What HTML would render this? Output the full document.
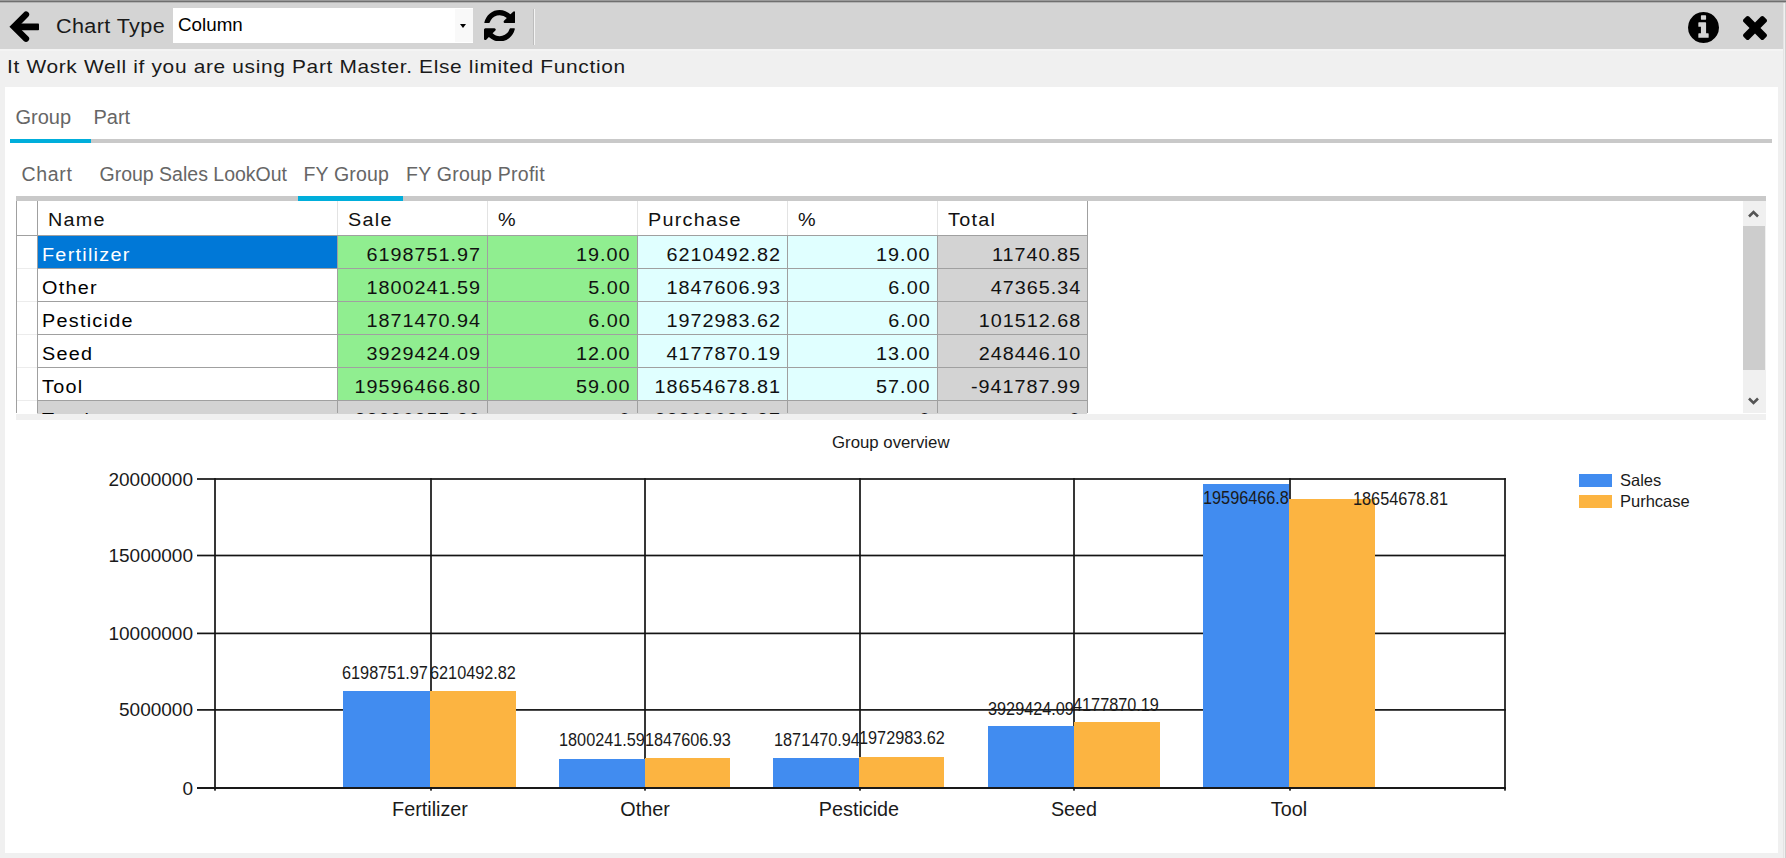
<!DOCTYPE html>
<html><head><meta charset="utf-8">
<style>
html,body{margin:0;padding:0;}
body{width:1786px;height:858px;overflow:hidden;background:#f0f0f0;position:relative;font-family:"Liberation Sans",sans-serif;color:#000;}
.a{position:absolute;}
.t{position:absolute;white-space:nowrap;line-height:1;}
.g{font-size:18px;letter-spacing:1.15px;color:#111;transform:scaleX(1.1);transform-origin:0 0}
.n{letter-spacing:0.9px;margin-right:-0.9px;transform-origin:100% 0}
.yl{font-size:19px;color:#1a1a1a}
.xl{font-size:19.8px;color:#1a1a1a}
.dl{font-size:18.7px;color:#1a1a1a;transform:scaleX(0.87);transform-origin:0 0}
.lg{font-size:16.5px;color:#1a1a1a}
svg{position:absolute;display:block;}
</style></head><body>
<!-- top border -->
<div class="a" style="left:0;top:0;width:1786px;height:1px;background:#9a9a9a"></div><div class="a" style="left:0;top:1px;width:1786px;height:1px;background:#6f6f6f"></div><div class="a" style="left:0;top:2px;width:1786px;height:1px;background:#b4b4b4"></div>
<!-- toolbar -->
<div class="a" style="left:0;top:3px;width:1783px;height:46px;background:#d4d4d4"></div>
<div class="a" style="left:1783px;top:3px;width:1px;height:855px;background:#e4e4e4"></div><div class="a" style="left:1785px;top:3px;width:1px;height:855px;background:#d0d0d0"></div>
<!-- back arrow -->
<svg style="left:0;top:0" width="50" height="50" viewBox="0 0 50 50"><polyline points="26,14.6 13.9,26.8 26,38.7" fill="none" stroke="#000" stroke-width="6.3" stroke-linecap="round" stroke-linejoin="miter"/><rect x="16" y="23.6" width="23" height="6.7" rx="0.8" fill="#000"/></svg>
<div class="t" style="left:56px;top:16px;font-size:20px;letter-spacing:0.35px;color:#1a1a1a;transform:scaleX(1.08);transform-origin:0 0">Chart Type</div>
<!-- combo -->
<div class="a" style="left:173px;top:8px;width:300px;height:35px;background:#fff"></div>
<div class="a" style="left:455px;top:9px;width:18px;height:33px;background:#f9f9f9"></div>
<div class="t" style="left:178px;top:15.5px;font-size:18.8px;color:#000">Column</div>
<div class="a" style="left:460px;top:24px;width:0;height:0;border-left:3.5px solid transparent;border-right:3.5px solid transparent;border-top:4px solid #000"></div>
<!-- refresh -->
<svg style="left:484px;top:9.8px" width="31.4" height="31.4" viewBox="0 128 1536 1536"><path d="M1511 1056q0 5-1 7-64 268-268 434.5t-478 166.5q-146 0-282.5-55t-243.5-157l-129 129q-19 19-45 19t-45-19-19-45v-448q0-26 19-45t45-19h448q26 0 45 19t19 45-19 45l-137 137q71 66 161 102t187 36q134 0 250-65t186-179q11-17 53-117 8-23 30-23h192q13 0 22.5 9.5t9.5 22.5zm25-800v448q0 26-19 45t-45 19h-448q-26 0-45-19t-19-45 19-45l138-138q-148-137-349-137-134 0-250 65t-186 179q-11 17-53 117-8 23-30 23h-199q-13 0-22.5-9.5t-9.5-22.5v-7q65-268 270-434.5t480-166.5q146 0 284 55.5t245 156.5l130-129q19-19 45-19t45 19 19 45z"/></svg>
<!-- separator -->
<div class="a" style="left:533px;top:9px;width:1px;height:36px;background:#bdbdbd"></div>
<div class="a" style="left:534px;top:9px;width:1px;height:36px;background:#f4f4f4"></div>
<!-- info -->
<svg style="left:1688.3px;top:11.5px" width="31" height="31" viewBox="0 128 1536 1536"><path d="M1024 1376v-160q0-14-9-23t-23-9h-96v-512q0-14-9-23t-23-9h-320q-14 0-23 9t-9 23v160q0 14 9 23t23 9h96v320h-96q-14 0-23 9t-9 23v160q0 14 9 23t23 9h448q14 0 23-9t9-23zm-128-896v-160q0-14-9-23t-23-9h-192q-14 0-23 9t-9 23v160q0 14 9 23t23 9h192q14 0 23-9t9-23zm640 416q0 209-103 385.5t-279.5 279.5-385.5 103-385.5-103-279.5-279.5-103-385.5 103-385.5 279.5-279.5 385.5-103 385.5 103 279.5 279.5 103 385.5z"/></svg>
<!-- close -->
<svg style="left:1743.2px;top:16.2px" width="24" height="24" viewBox="110 366 1188 1188"><path d="M1298 1322q0 40-28 68l-136 136q-28 28-68 28t-68-28l-294-294-294 294q-28 28-68 28t-68-28l-136-136q-28-28-28-68t28-68l294-294-294-294q-28-28-28-68t28-68l136-136q28-28 68-28t68 28l294 294 294-294q28-28 68-28t68 28l136 136q28 28 28 68t-28 68l-294 294 294 294q28 28 28 68z"/></svg>

<div class="a" style="left:0;top:49px;width:1783px;height:2px;background:#f4f4f4"></div>
<!-- info label -->
<div class="t" style="left:6.5px;top:57px;font-size:19px;letter-spacing:0.6px;color:#1a1a1a;transform:scaleX(1.1);transform-origin:0 0">It Work Well if you are using Part Master. Else limited Function</div>

<!-- white panel -->
<div class="a" style="left:5px;top:87px;width:1773px;height:766px;background:#fff"></div>

<!-- tabs 1 -->
<div class="t" style="left:15.5px;top:107px;font-size:20px;color:#666">Group</div>
<div class="t" style="left:93.5px;top:107px;font-size:20px;color:#666">Part</div>
<div class="a" style="left:10px;top:139px;width:1762px;height:4px;background:#c9c9c9"></div>
<div class="a" style="left:10px;top:139px;width:81px;height:4px;background:#00aedb"></div>

<!-- tabs 2 -->
<div class="t" style="left:21.5px;top:164.5px;font-size:19.5px;letter-spacing:0.7px;color:#666">Chart</div>
<div class="t" style="left:99.5px;top:164.5px;font-size:19.5px;color:#666">Group Sales LookOut</div>
<div class="t" style="left:303.5px;top:164.5px;font-size:19.5px;letter-spacing:0.15px;color:#666">FY Group</div>
<div class="t" style="left:406px;top:164.5px;font-size:19.5px;letter-spacing:0.25px;color:#666">FY Group Profit</div>
<div class="a" style="left:16px;top:196px;width:1750px;height:5px;background:#c9c9c9"></div>
<div class="a" style="left:298px;top:196px;width:105px;height:5px;background:#00aedb"></div>

<!-- GRID -->
<div class="a" style="left:16px;top:201px;width:1750px;height:213px;background:#fff;overflow:hidden">
<div class="t g" style="left:31.5px;top:9.5px">Name</div>
<div class="t g" style="left:331.5px;top:9.5px">Sale</div>
<div class="t g" style="left:481.5px;top:9.5px">%</div>
<div class="t g" style="left:631.5px;top:9.5px">Purchase</div>
<div class="t g" style="left:781.5px;top:9.5px">%</div>
<div class="t g" style="left:931.5px;top:9.5px">Total</div>
<div class="a" style="left:21px;top:35px;width:300px;height:33px;background:#0078d7"></div>
<div class="a" style="left:321px;top:35px;width:150px;height:33px;background:#90ee90"></div>
<div class="a" style="left:471px;top:35px;width:150px;height:33px;background:#90ee90"></div>
<div class="a" style="left:621px;top:35px;width:150px;height:33px;background:#e0ffff"></div>
<div class="a" style="left:771px;top:35px;width:150px;height:33px;background:#e0ffff"></div>
<div class="a" style="left:921px;top:35px;width:150px;height:33px;background:#d3d3d3"></div>
<div class="t g" style="left:26px;top:44.5px;color:#fff">Fertilizer</div>
<div class="t g n" style="right:1286px;top:44.5px">6198751.97</div>
<div class="t g n" style="right:1136px;top:44.5px">19.00</div>
<div class="t g n" style="right:986px;top:44.5px">6210492.82</div>
<div class="t g n" style="right:836px;top:44.5px">19.00</div>
<div class="t g n" style="right:686px;top:44.5px">11740.85</div>
<div class="a" style="left:21px;top:68px;width:300px;height:33px;background:#ffffff"></div>
<div class="a" style="left:321px;top:68px;width:150px;height:33px;background:#90ee90"></div>
<div class="a" style="left:471px;top:68px;width:150px;height:33px;background:#90ee90"></div>
<div class="a" style="left:621px;top:68px;width:150px;height:33px;background:#e0ffff"></div>
<div class="a" style="left:771px;top:68px;width:150px;height:33px;background:#e0ffff"></div>
<div class="a" style="left:921px;top:68px;width:150px;height:33px;background:#d3d3d3"></div>
<div class="t g" style="left:26px;top:77.5px;color:#000">Other</div>
<div class="t g n" style="right:1286px;top:77.5px">1800241.59</div>
<div class="t g n" style="right:1136px;top:77.5px">5.00</div>
<div class="t g n" style="right:986px;top:77.5px">1847606.93</div>
<div class="t g n" style="right:836px;top:77.5px">6.00</div>
<div class="t g n" style="right:686px;top:77.5px">47365.34</div>
<div class="a" style="left:21px;top:101px;width:300px;height:33px;background:#ffffff"></div>
<div class="a" style="left:321px;top:101px;width:150px;height:33px;background:#90ee90"></div>
<div class="a" style="left:471px;top:101px;width:150px;height:33px;background:#90ee90"></div>
<div class="a" style="left:621px;top:101px;width:150px;height:33px;background:#e0ffff"></div>
<div class="a" style="left:771px;top:101px;width:150px;height:33px;background:#e0ffff"></div>
<div class="a" style="left:921px;top:101px;width:150px;height:33px;background:#d3d3d3"></div>
<div class="t g" style="left:26px;top:110.5px;color:#000">Pesticide</div>
<div class="t g n" style="right:1286px;top:110.5px">1871470.94</div>
<div class="t g n" style="right:1136px;top:110.5px">6.00</div>
<div class="t g n" style="right:986px;top:110.5px">1972983.62</div>
<div class="t g n" style="right:836px;top:110.5px">6.00</div>
<div class="t g n" style="right:686px;top:110.5px">101512.68</div>
<div class="a" style="left:21px;top:134px;width:300px;height:33px;background:#ffffff"></div>
<div class="a" style="left:321px;top:134px;width:150px;height:33px;background:#90ee90"></div>
<div class="a" style="left:471px;top:134px;width:150px;height:33px;background:#90ee90"></div>
<div class="a" style="left:621px;top:134px;width:150px;height:33px;background:#e0ffff"></div>
<div class="a" style="left:771px;top:134px;width:150px;height:33px;background:#e0ffff"></div>
<div class="a" style="left:921px;top:134px;width:150px;height:33px;background:#d3d3d3"></div>
<div class="t g" style="left:26px;top:143.5px;color:#000">Seed</div>
<div class="t g n" style="right:1286px;top:143.5px">3929424.09</div>
<div class="t g n" style="right:1136px;top:143.5px">12.00</div>
<div class="t g n" style="right:986px;top:143.5px">4177870.19</div>
<div class="t g n" style="right:836px;top:143.5px">13.00</div>
<div class="t g n" style="right:686px;top:143.5px">248446.10</div>
<div class="a" style="left:21px;top:167px;width:300px;height:33px;background:#ffffff"></div>
<div class="a" style="left:321px;top:167px;width:150px;height:33px;background:#90ee90"></div>
<div class="a" style="left:471px;top:167px;width:150px;height:33px;background:#90ee90"></div>
<div class="a" style="left:621px;top:167px;width:150px;height:33px;background:#e0ffff"></div>
<div class="a" style="left:771px;top:167px;width:150px;height:33px;background:#e0ffff"></div>
<div class="a" style="left:921px;top:167px;width:150px;height:33px;background:#d3d3d3"></div>
<div class="t g" style="left:26px;top:176.5px;color:#000">Tool</div>
<div class="t g n" style="right:1286px;top:176.5px">19596466.80</div>
<div class="t g n" style="right:1136px;top:176.5px">59.00</div>
<div class="t g n" style="right:986px;top:176.5px">18654678.81</div>
<div class="t g n" style="right:836px;top:176.5px">57.00</div>
<div class="t g n" style="right:686px;top:176.5px">-941787.99</div>
<div class="a" style="left:21px;top:200px;width:300px;height:33px;background:#d3d3d3"></div>
<div class="a" style="left:321px;top:200px;width:150px;height:33px;background:#d3d3d3"></div>
<div class="a" style="left:471px;top:200px;width:150px;height:33px;background:#d3d3d3"></div>
<div class="a" style="left:621px;top:200px;width:150px;height:33px;background:#d3d3d3"></div>
<div class="a" style="left:771px;top:200px;width:150px;height:33px;background:#d3d3d3"></div>
<div class="a" style="left:921px;top:200px;width:150px;height:33px;background:#d3d3d3"></div>
<div class="t g" style="left:26px;top:209.5px;color:#000">Total</div>
<div class="t g n" style="right:1286px;top:209.5px">33396355.39</div>
<div class="t g n" style="right:1136px;top:209.5px">0</div>
<div class="t g n" style="right:986px;top:209.5px">32863632.37</div>
<div class="t g n" style="right:836px;top:209.5px">0</div>
<div class="t g n" style="right:686px;top:209.5px">0</div>
<div class="a" style="left:0;top:34px;width:1072px;height:1px;background:#a0a0a0"></div>
<div class="a" style="left:0;top:67px;width:21px;height:1px;background:#ececec"></div>
<div class="a" style="left:21px;top:67px;width:1051px;height:1px;background:#a0a0a0"></div>
<div class="a" style="left:0;top:100px;width:21px;height:1px;background:#ececec"></div>
<div class="a" style="left:21px;top:100px;width:1051px;height:1px;background:#a0a0a0"></div>
<div class="a" style="left:0;top:133px;width:21px;height:1px;background:#ececec"></div>
<div class="a" style="left:21px;top:133px;width:1051px;height:1px;background:#a0a0a0"></div>
<div class="a" style="left:0;top:166px;width:21px;height:1px;background:#ececec"></div>
<div class="a" style="left:21px;top:166px;width:1051px;height:1px;background:#a0a0a0"></div>
<div class="a" style="left:0;top:199px;width:21px;height:1px;background:#ececec"></div>
<div class="a" style="left:21px;top:199px;width:1051px;height:1px;background:#a0a0a0"></div>
<div class="a" style="left:0px;top:0;width:1px;height:34px;background:#a0a0a0"></div>
<div class="a" style="left:0px;top:34px;width:1px;height:178px;background:#a0a0a0"></div>
<div class="a" style="left:21px;top:0;width:1px;height:34px;background:#a0a0a0"></div>
<div class="a" style="left:21px;top:34px;width:1px;height:178px;background:#a0a0a0"></div>
<div class="a" style="left:321px;top:0;width:1px;height:34px;background:#e3e3e3"></div>
<div class="a" style="left:321px;top:34px;width:1px;height:178px;background:#a0a0a0"></div>
<div class="a" style="left:471px;top:0;width:1px;height:34px;background:#e3e3e3"></div>
<div class="a" style="left:471px;top:34px;width:1px;height:178px;background:#a0a0a0"></div>
<div class="a" style="left:621px;top:0;width:1px;height:34px;background:#e3e3e3"></div>
<div class="a" style="left:621px;top:34px;width:1px;height:178px;background:#a0a0a0"></div>
<div class="a" style="left:771px;top:0;width:1px;height:34px;background:#e3e3e3"></div>
<div class="a" style="left:771px;top:34px;width:1px;height:178px;background:#a0a0a0"></div>
<div class="a" style="left:921px;top:0;width:1px;height:34px;background:#e3e3e3"></div>
<div class="a" style="left:921px;top:34px;width:1px;height:178px;background:#a0a0a0"></div>
<div class="a" style="left:1071px;top:0;width:1px;height:34px;background:#a0a0a0"></div>
<div class="a" style="left:1071px;top:34px;width:1px;height:178px;background:#a0a0a0"></div>
<div class="a" style="left:1727px;top:0;width:23px;height:212px;background:#f0f0f0"></div>
<div class="a" style="left:1727px;top:25px;width:22px;height:144px;background:#cdcdcd"></div>
<svg style="left:1732px;top:9px" width="11" height="8" viewBox="0 0 11 8"><path d="M1 6.5 L5.5 2 L10 6.5" fill="none" stroke="#555" stroke-width="2.6"/></svg>
<svg style="left:1732px;top:196px" width="11" height="8" viewBox="0 0 11 8"><path d="M1 1.5 L5.5 6 L10 1.5" fill="none" stroke="#555" stroke-width="2.6"/></svg>
</div>
<div class="a" style="left:16px;top:414px;width:1750px;height:6px;background:#f0f0f0"></div>

<!-- CHART -->
<svg style="left:0;top:0" width="1786" height="858">
<rect x="197" y="478.15" width="1308.85" height="1.7" fill="#141414"/>
<rect x="197" y="554.65" width="1308.85" height="1.7" fill="#141414"/>
<rect x="197" y="632.55" width="1308.85" height="1.7" fill="#141414"/>
<rect x="197" y="709.05" width="1308.85" height="1.7" fill="#141414"/>
<rect x="197" y="787.15" width="1308.85" height="1.7" fill="#141414"/>
<rect x="214.15" y="478.15" width="1.7" height="312.5" fill="#141414"/>
<rect x="430.15" y="478.15" width="1.7" height="312.5" fill="#141414"/>
<rect x="644.15" y="478.15" width="1.7" height="312.5" fill="#141414"/>
<rect x="859.15" y="478.15" width="1.7" height="312.5" fill="#141414"/>
<rect x="1073.15" y="478.15" width="1.7" height="312.5" fill="#141414"/>
<rect x="1289.15" y="478.15" width="1.7" height="312.5" fill="#141414"/>
<rect x="1504.15" y="478.15" width="1.7" height="312.5" fill="#141414"/>
<rect shape-rendering="crispEdges" x="343" y="691" width="87" height="96" fill="#418cf0"/>
<rect shape-rendering="crispEdges" x="430" y="691" width="86" height="96" fill="#fcb441"/>
<rect shape-rendering="crispEdges" x="559" y="759" width="86" height="28" fill="#418cf0"/>
<rect shape-rendering="crispEdges" x="645" y="758" width="85" height="29" fill="#fcb441"/>
<rect shape-rendering="crispEdges" x="773" y="758" width="86" height="29" fill="#418cf0"/>
<rect shape-rendering="crispEdges" x="859" y="757" width="85" height="30" fill="#fcb441"/>
<rect shape-rendering="crispEdges" x="988" y="726" width="86" height="61" fill="#418cf0"/>
<rect shape-rendering="crispEdges" x="1074" y="722" width="86" height="65" fill="#fcb441"/>
<rect shape-rendering="crispEdges" x="1203" y="484" width="86" height="303" fill="#418cf0"/>
<rect shape-rendering="crispEdges" x="1289" y="499" width="86" height="288" fill="#fcb441"/>
<rect x="197" y="787.15" width="1308.85" height="1.7" fill="#141414"/>
</svg>
<div class="t" style="left:832px;top:434.5px;font-size:16.8px;color:#1a1a1a">Group overview</div>
<div class="t yl" style="right:1593px;top:469.5px">20000000</div>
<div class="t yl" style="right:1593px;top:546.0px">15000000</div>
<div class="t yl" style="right:1593px;top:623.9px">10000000</div>
<div class="t yl" style="right:1593px;top:700.4px">5000000</div>
<div class="t yl" style="right:1593px;top:778.5px">0</div>
<div class="t xl" style="left:330px;width:200px;text-align:center;top:799.5px">Fertilizer</div>
<div class="t xl" style="left:545px;width:200px;text-align:center;top:799.5px">Other</div>
<div class="t xl" style="left:759px;width:200px;text-align:center;top:799.5px">Pesticide</div>
<div class="t xl" style="left:974px;width:200px;text-align:center;top:799.5px">Seed</div>
<div class="t xl" style="left:1189px;width:200px;text-align:center;top:799.5px">Tool</div>
<div class="t dl" style="left:342px;top:664.4px">6198751.97</div>
<div class="t dl" style="left:430px;top:664.4px">6210492.82</div>
<div class="t dl" style="left:559.3px;top:731.0px">1800241.59</div>
<div class="t dl" style="left:644.8px;top:731.0px">1847606.93</div>
<div class="t dl" style="left:774.2px;top:731.0px">1871470.94</div>
<div class="t dl" style="left:858.8px;top:729.1px">1972983.62</div>
<div class="t dl" style="left:987.9px;top:700.0px">3929424.09</div>
<div class="t dl" style="left:1073.2px;top:695.8px">4177870.19</div>
<div class="t dl" style="left:1202.9px;top:488.5px">19596466.8</div>
<div class="t dl" style="left:1353.4px;top:489.9px">18654678.81</div>
<div class="a" style="left:1579px;top:474px;width:33px;height:13px;background:#418cf0"></div>
<div class="a" style="left:1579px;top:495px;width:33px;height:13px;background:#fcb441"></div>
<div class="t lg" style="left:1620px;top:472px">Sales</div>
<div class="t lg" style="left:1620px;top:493px">Purhcase</div>

</body></html>
